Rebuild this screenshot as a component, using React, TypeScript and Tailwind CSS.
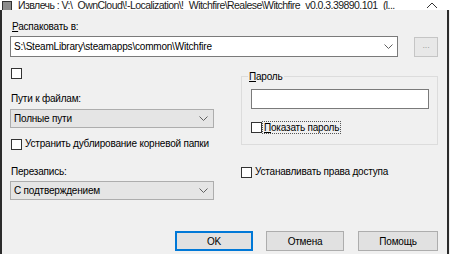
import React from 'react';

const font = { fontFamily: '"Liberation Sans", Arial, sans-serif' };

function Chevron() {
  return (
    <svg width="9" height="5" viewBox="0 0 9 5" className="shrink-0">
      <path d="M0.5 0.5 L4.5 4.5 L8.5 0.5" fill="none" stroke="#606060" strokeWidth="1" />
    </svg>
  );
}

function Box() {
  return <div className="w-[11px] h-[11px] border border-[#333] bg-white shrink-0" />;
}

function Select({ value }: { value: string }) {
  return (
    <div className="h-[19px] w-[204px] border border-[#adadad] bg-[#e5e5e5] flex items-center justify-between pl-[3px] pr-[5px] text-black">
      <span>{value}</span>
      <Chevron />
    </div>
  );
}

export default function App() {
  return (
    <div className="w-[450px] h-[254px] bg-[#f0f0f0] overflow-hidden text-[10px] tracking-[-0.2px] text-black whitespace-nowrap" style={font}>
      <div className="h-[10px] bg-white overflow-hidden flex items-end justify-between">
        <div className="flex items-center gap-[6px] pl-[2px] -mb-[4px]">
          <div className="w-[10px] h-[11px] border border-[#333] bg-[#8c8c8c]" />
          <span className="text-[10.5px] tracking-[-0.55px] text-[#1a1a1a]">
            Извлечь : V:\_OwnCloud\!-Localization\!_Witchfire\Realese\Witchfire_v0.0.3.39890.101_(l...
          </span>
        </div>
        <svg width="12" height="7" viewBox="0 0 12 7" className="mr-[12px] mb-[1px]">
          <path d="M1 6 L6 1 L11 6" fill="none" stroke="#333" strokeWidth="1" />
        </svg>
      </div>
      <div className="flex h-[244px]">
        <div className="w-[2px] bg-[#2b2b2b]" />
        <div className="flex-1 flex flex-col pl-[8px] pr-[9px]">
          <div className="mt-[10px] leading-[13px] pl-[2px]">
            <span className="underline">Р</span>аспаковать в:
          </div>
          <div className="mt-[3px] flex items-center">
            <div className="h-[21px] w-[388px] border border-[#7a7a7a] bg-white flex items-center justify-between pl-[3px] pr-[4px]">
              <span>S:\SteamLibrary\steamapps\common\Witchfire</span>
              <Chevron />
            </div>
            <div className="ml-[16px] h-[20px] w-[24px] border border-[#c5c5c5] bg-[#e8e8e8] flex items-center justify-center text-[9px] text-[#a0a0a0] leading-none pb-[3px]">
              ...
            </div>
          </div>
          <div className="flex mt-[11px]">
            <div className="w-[204px] flex flex-col">
              <div className="pl-[1px]"><Box /></div>
              <div className="mt-[13px] leading-[13px] pl-[1px]">Пути к файлам:</div>
              <div className="mt-[4px]"><Select value="Полные пути" /></div>
              <div className="mt-[10px] flex items-center gap-[3px] pl-[1px] leading-[12px]">
                <Box />
                <span>Устранить дублирование корневой папки</span>
              </div>
              <div className="mt-[15px] leading-[13px] pl-[1px]">Перезапись:</div>
              <div className="mt-[3px]"><Select value="С подтверждением" /></div>
            </div>
            <div className="ml-[27px] w-[197px] flex flex-col">
              <div className="mt-[8px] relative border border-[#dcdcdc] h-[69px] flex flex-col pl-[9px] pr-[8px]">
                <span className="absolute left-[6px] -top-[7px] bg-[#f0f0f0] px-[1px] leading-[13px]">
                  <span className="underline">П</span>ароль
                </span>
                <div className="mt-[12px] h-[20px] border border-[#7a7a7a] bg-white" />
                <div className="mt-[12px] flex items-center">
                  <Box />
                  <span className="border border-dotted border-[#555] leading-[11px] px-[1px]">
                    <span className="underline">П</span>оказать пароль
                  </span>
                </div>
              </div>
              <div className="mt-[21px] flex items-center gap-[3px] leading-[12px]">
                <Box />
                <span>Устанавливать права доступа</span>
              </div>
            </div>
          </div>
          <div className="mt-auto mb-[3px] flex justify-end items-center">
            <div className="h-[20px] w-[78px] border-2 border-[#0078d7] bg-[#e1e1e1] flex items-center justify-center">OK</div>
            <div className="ml-[13px] h-[20px] w-[78px] border border-[#adadad] bg-[#e1e1e1] flex items-center justify-center">Отмена</div>
            <div className="ml-[14px] h-[20px] w-[80px] border border-[#adadad] bg-[#e1e1e1] flex items-center justify-center">Помощь</div>
          </div>
        </div>
        <div className="w-[2px] bg-[#2b2b2b]" />
        <div className="w-[1px] bg-[#f0f0f0]" />
      </div>
    </div>
  );
}
